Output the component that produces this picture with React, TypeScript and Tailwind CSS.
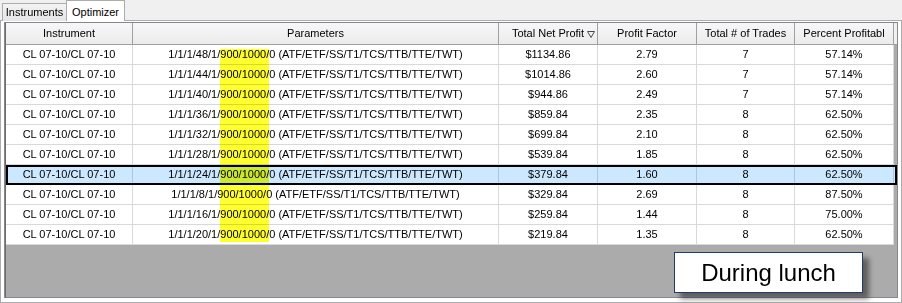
const columns = [
  { label: "Instrument", width: "w-[127px]" },
  { label: "Parameters", width: "w-[366px]" },
  { label: "Total Net Profit", width: "w-[99px]", sorted: true },
  { label: "Profit Factor", width: "w-[99px]" },
  { label: "Total # of Trades", width: "w-[98px]" },
  { label: "Percent Profitabl", width: "w-[99px]" },
];

const rows = [
  { step: "48", profit: "$1134.86", factor: "2.79", trades: "7", pct: "57.14%" },
  { step: "44", profit: "$1014.86", factor: "2.60", trades: "7", pct: "57.14%" },
  { step: "40", profit: "$944.86", factor: "2.49", trades: "7", pct: "57.14%" },
  { step: "36", profit: "$859.84", factor: "2.35", trades: "8", pct: "62.50%" },
  { step: "32", profit: "$699.84", factor: "2.10", trades: "8", pct: "62.50%" },
  { step: "28", profit: "$539.84", factor: "1.85", trades: "8", pct: "62.50%" },
  { step: "24", profit: "$379.84", factor: "1.60", trades: "8", pct: "62.50%", selected: true },
  { step: "8", profit: "$329.84", factor: "2.69", trades: "8", pct: "87.50%" },
  { step: "16", profit: "$259.84", factor: "1.44", trades: "8", pct: "75.00%" },
  { step: "20", profit: "$219.84", factor: "1.35", trades: "8", pct: "62.50%" },
];

function SortGlyph() {
  return (
    <svg width="8" height="7" viewBox="0 0 8 7" className="absolute right-[2px] top-[8px]">
      <path d="M0.5 0.5 H7.5 L4 6.5 Z" fill="none" stroke="#4a4a4a" strokeWidth="1" />
    </svg>
  );
}

export default function App() {
  return (
    <div className="w-[902px] h-[303px] bg-[#f0f0f0] font-['Liberation_Sans',Arial,sans-serif] text-[11px] text-black overflow-hidden">
      {/* tab strip */}
      <div className="flex items-end h-[21px] pl-[2px]">
        <div className="h-[18px] w-[65px] flex items-center justify-center border border-b-0 border-[#acacac] bg-linear-to-b from-[#f3f3f3] to-[#e5e5e5]">
          Instruments
        </div>
        <div className="relative z-10 -ml-px h-[21px] w-[59px] flex items-start pt-[3px] justify-center border border-b-0 border-[#acacac] bg-white">
          Optimizer
        </div>
      </div>

      {/* tab page */}
      <div className="-mt-px h-[283px] border border-[#acacac] bg-white pt-px pb-[4px] px-[3px]">
        <div className="h-[276px] border border-[#828790] flex">
          <div className="flex-1 flex flex-col border-l border-[#6d6d6d] bg-[#ababab]">
            {/* header */}
            <div className="flex h-[22px] shrink-0 bg-white">
              {columns.map((c) => (
                <div
                  key={c.label}
                  className={`${c.width} relative flex items-center justify-center border-r border-b border-[#a0a0a0] bg-linear-to-b from-[#f7f7f7] to-[#ebebeb] whitespace-nowrap overflow-hidden`}
                >
                  {c.label}
                  {c.sorted && <SortGlyph />}
                </div>
              ))}
              <div className="flex-1 border-b border-[#a0a0a0] bg-[#f0f0f0]" />
            </div>

            {/* body */}
            <div className="relative shrink-0">
              {rows.map((r) => (
                <div
                  key={r.step}
                  className={`flex h-[20px] ${r.selected ? "bg-[#cce8ff] outline-2 outline-black -outline-offset-2" : ""}`}
                >
                  {[
                    "CL 07-10/CL 07-10",
                    `1/1/1/${r.step}/1/900/1000/0 (ATF/ETF/SS/T1/TCS/TTB/TTE/TWT)`,
                    r.profit,
                    r.factor,
                    r.trades,
                    r.pct,
                  ].map((v, i) => (
                    <div
                      key={i}
                      className={`${columns[i].width} flex items-center justify-center border-r border-b ${r.selected ? "border-[#a8c8e8]" : "border-[#d9d9d9] bg-white"} whitespace-nowrap`}
                    >
                      {v}
                    </div>
                  ))}
                  <div className={`flex-1 ${r.selected ? "" : "bg-[#ababab]"}`} />
                </div>
              ))}
              {/* highlighter mark over the 900/1000 values */}
              <div className="absolute left-[214px] top-[4px] w-[49px] h-[193px] bg-[#ffff30] mix-blend-multiply pointer-events-none" />
            </div>

            {/* empty area with note */}
            <div className="flex-1 flex justify-end items-start pt-[7px] pr-[34px]">
              <div className="w-[189px] h-[41px] border border-[#203c6c] bg-white shadow-[6px_6px_5px_rgba(0,0,0,0.45)] flex items-center justify-center text-[24px] leading-none">
                During lunch
              </div>
            </div>
          </div>
        </div>
      </div>
    </div>
  );
}
